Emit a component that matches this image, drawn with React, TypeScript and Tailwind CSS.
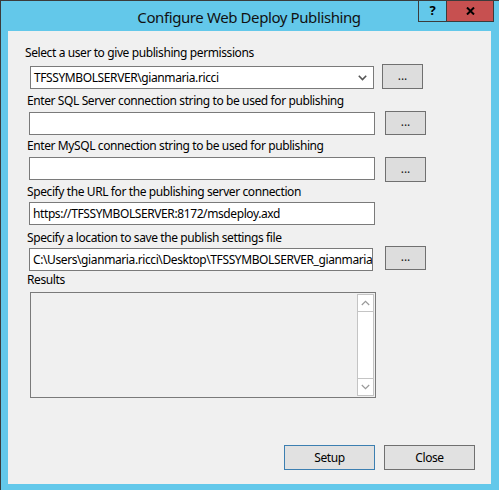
import React from "react";

const font = { fontFamily: '"Noto Sans", "Segoe UI", Arial, sans-serif' };

function DotBtn({ cls }: { cls: string }) {
  return (
    <div
      className={`flex items-center justify-center border border-[#707070] bg-[#dddddd] text-[12px] leading-none text-[#1a1a1a] ${cls}`}
    >
      <span className="-mt-[2px]">...</span>
    </div>
  );
}

function Label({ text, cls }: { text: string; cls: string }) {
  return (
    <div className={`h-[16px] whitespace-nowrap text-[12px] leading-[16px] tracking-[-0.4px] text-black ${cls}`}>
      {text}
    </div>
  );
}

function TextBox({ value, cls }: { value?: string; cls: string }) {
  return (
    <div
      className={`flex items-center overflow-hidden whitespace-nowrap border border-[#7a7a7a] bg-white pl-[3px] text-[12px] leading-none tracking-[-0.4px] text-black ${cls}`}
    >
      {value}
    </div>
  );
}

export default function App() {
  return (
    <div className="h-[490px] w-[499px] overflow-hidden" style={font}>
      <div className="flex h-[490px] w-[499px] flex-col border-l border-t border-[#3b3b3b] bg-[#63c8ea]">
        {/* title bar */}
        <div className="relative flex h-[30px] shrink-0 items-center justify-center">
          <span className="pr-[2px] pt-[2px] text-[15px] tracking-[-0.4px] text-[#111]">Configure Web Deploy Publishing</span>
          <div className="absolute left-[417px] top-[-1px] flex h-[22px]">
            <div className="flex h-[22px] w-[29px] items-center justify-center border border-[#3b3b3b] text-[13px] font-bold text-black">
              ?
            </div>
            <div className="-ml-px flex h-[22px] w-[48px] items-center justify-center border border-[#3b3b3b] bg-[#c75050] text-[13px] font-bold text-black">
              <svg width="9" height="8" viewBox="0 0 9 8">
                <path d="M1 0.5 L8 7.5 M8 0.5 L1 7.5" stroke="#000" strokeWidth="2" />
              </svg>
            </div>
          </div>
        </div>
        {/* client area */}
        <div className="ml-[7px] flex h-[453px] w-[483px] flex-col bg-[#f0f0f0]">
          <Label text="Select a user to give publishing permissions" cls="ml-[17px] mt-[14px]" />
          <div className="mt-[3px] flex h-[25px] items-start">
            <div className="ml-[22px] mt-[2px] flex h-[23px] w-[344px] items-center justify-between border border-[#7a7a7a] bg-white pl-[3px] pr-[6px] text-[12px] leading-none tracking-[-0.4px] text-black">
              <span>TFSSYMBOLSERVER\gianmaria.ricci</span>
              <svg width="9" height="6" viewBox="0 0 9 6">
                <path d="M0.8 0.8 L4.5 4.5 L8.2 0.8" stroke="#555" strokeWidth="1.6" fill="none" />
              </svg>
            </div>
            <DotBtn cls="ml-[8px] h-[25px] w-[41px]" />
          </div>
          <Label text="Enter SQL Server connection string to be used for publishing" cls="ml-[19px] mt-[4px]" />
          <div className="mt-[2px] flex h-[24px] items-start">
            <TextBox cls="ml-[21px] mt-[1px] h-[23px] w-[346px]" />
            <DotBtn cls="ml-[10px] h-[24px] w-[41px]" />
          </div>
          <Label text="Enter MySQL connection string to be used for publishing" cls="ml-[19px] mt-[3px]" />
          <div className="mt-[3px] flex h-[25px] items-start">
            <TextBox cls="ml-[21px] h-[23px] w-[346px]" />
            <DotBtn cls="ml-[10px] h-[25px] w-[41px]" />
          </div>
          <Label text="Specify the URL for the publishing server connection" cls="ml-[19px] mt-[2px]" />
          <div className="mt-[2px] flex h-[23px] items-start">
            <TextBox value="https://TFSSYMBOLSERVER:8172/msdeploy.axd" cls="ml-[21px] h-[23px] w-[346px]" />
          </div>
          <Label text="Specify a location to save the publish settings file" cls="ml-[19px] mt-[5px]" />
          <div className="flex h-[25px] items-start">
            <TextBox
              value="C:\Users\gianmaria.ricci\Desktop\TFSSYMBOLSERVER_gianmaria"
              cls="ml-[21px] mt-[2px] h-[23px] w-[344px]"
            />
            <DotBtn cls="ml-[12px] h-[24px] w-[41px]" />
          </div>
          <Label text="Results" cls="ml-[19px] mt-[1px]" />
          <div className="ml-[22px] mt-[4px] flex h-[106px] w-[346px] justify-end border border-[#7a7a7a] bg-[#f0f0f0] p-px">
            <div className="flex h-full w-[17px] flex-col border border-[#c4c4c4] bg-white">
              <div className="flex h-[17px] items-center justify-center border-b border-[#c4c4c4]">
                <svg width="9" height="6" viewBox="0 0 9 6">
                  <path d="M0.8 5 L4.5 1.3 L8.2 5" stroke="#9a9a9a" strokeWidth="1.2" fill="none" />
                </svg>
              </div>
              <div className="flex-1" />
              <div className="flex h-[17px] items-center justify-center border-t border-[#c4c4c4]">
                <svg width="9" height="6" viewBox="0 0 9 6">
                  <path d="M0.8 1 L4.5 4.7 L8.2 1" stroke="#9a9a9a" strokeWidth="1.2" fill="none" />
                </svg>
              </div>
            </div>
          </div>
          <div className="mt-[47px] flex h-[25px]">
            <div className="ml-[276px] flex h-[25px] w-[91px] items-center justify-center border border-[#3c7fb1] bg-[#e1e1e1] text-[12px] tracking-[-0.4px] text-black">
              Setup
            </div>
            <div className="ml-[9px] flex h-[25px] w-[91px] items-center justify-center border border-[#707070] bg-[#e1e1e1] text-[12px] tracking-[-0.4px] text-black">
              Close
            </div>
          </div>
        </div>
      </div>
    </div>
  );
}
